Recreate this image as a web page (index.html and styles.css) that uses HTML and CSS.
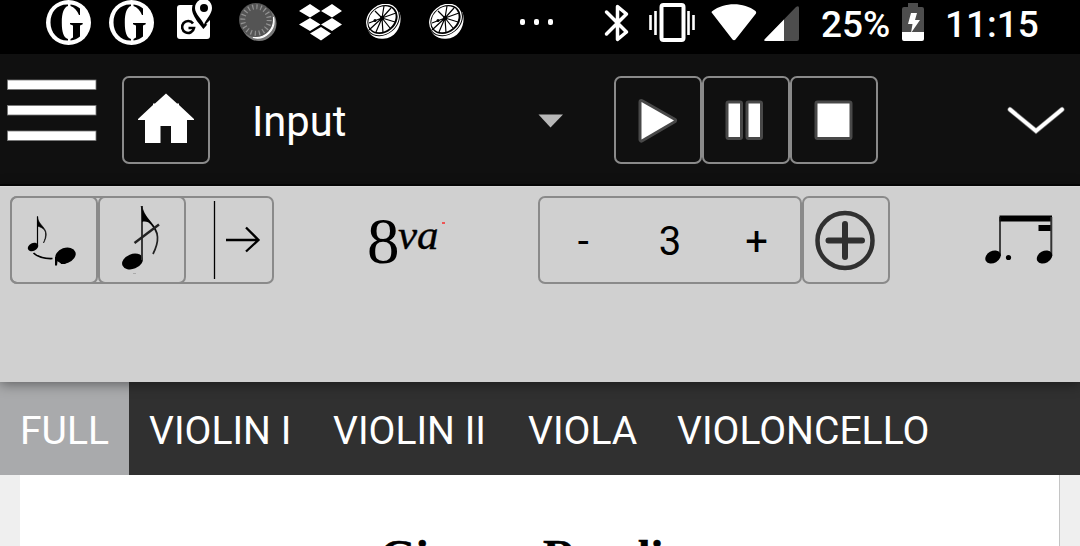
FILE: index.html
```
<!DOCTYPE html>
<html lang="en">
<head>
<meta charset="utf-8">
<title>Score editor</title>
<link rel="stylesheet" href="styles.css">
</head>
<body>
<svg class="defs" width="0" height="0">
  <defs>
    <symbol id="news" viewBox="0 0 45 45">
      <circle cx="22.5" cy="22.5" r="22.5" fill="#fff"/>
      <path d="M22 4.500C11 4 4.500 12 4.500 22.500S12 41 22 40.500V39C17.500 37.500 15.800 32 15.800 22.500S18 7 22 6Z"/>
      <path d="M24.500 4.500Q30 5 34 8.500V15H33Q30 8 24.500 6ZM24 23H36.700V24.200L34 25.500V36.500Q30 40 24.500 40.500V39L27 37.500V25.500L24 24.200Z"/>
    </symbol>
    <symbol id="citrus" viewBox="0 0 35 36">
      <path d="M33.500 8C37 18 32 34 17 34.800C8 35.500 1 29 1 22Z" fill="#fff"/>
      <ellipse cx="17" cy="16" rx="18.500" ry="14.500" transform="rotate(-40 17 16)" fill="#000"/>
      <ellipse cx="16.500" cy="15.500" rx="17" ry="13.800" transform="rotate(-40 16.500 15.500)" fill="none" stroke="#fff" stroke-width="1.300"/>
      <ellipse cx="16" cy="15.300" rx="14.800" ry="11.700" transform="rotate(-40 16 15.300)" fill="#fff"/>
      <path d="M16 14L18 2M16 14L25 4M16 14L30 9M16 14L29 18M16 14L24 24M16 14L17 29M16 14L10 28M16 14L3 26M16 14L3 19M16 14L9 7" stroke="#000" stroke-width="1.200"/>
      <circle cx="16" cy="14" r="2"/><circle cx="9" cy="16.500" r="1.500"/>
    </symbol>
  </defs>
</svg>

<div class="status">
  <svg class="s-news" width="45" height="45"><use href="#news"/></svg>
  <svg class="s-news2" width="45" height="45"><use href="#news"/></svg>
  <svg class="s-map" width="38" height="40" viewBox="0 0 38 40">
    <rect x="1" y="5" width="33" height="34" rx="3" fill="#fff"/>
    <path d="M28-3C20-3 16 3 16 9C16 17 27 28 27.500 29C28 28 40 17 40 9C40 3 36-3 28-3Z"/>
    <path d="M28-1C22-1 19 3.500 19 8C19 14 26 19 28 24.500C30 19 36 14 36 8C36 3.500 33-1 28-1Z" fill="#fff"/>
    <path d="M34 20V26L30 24Z" fill="#fff"/>
    <circle cx="28" cy="8" r="4"/>
    <path d="M17 23.500A6 6 0 1 0 18 28H12.500" fill="none" stroke="#000" stroke-width="2.600"/>
  </svg>
  <svg class="s-moon" width="38" height="38" viewBox="0 0 38 38">
    <circle cx="20" cy="20.500" r="17.500" fill="#777"/>
    <path d="M34.500 14A17 17 0 0 1 14 34.500Q32 33 34.500 14" fill="#fff" stroke="#fff" stroke-width="1.200"/>
    <circle cx="17" cy="17" r="17" fill="#545454"/>
    <circle cx="17" cy="17" r="13.200" fill="none" stroke="#929292" stroke-width="5" stroke-dasharray="1.200 2.946"/>
  </svg>
  <svg class="s-box" width="44" height="38" viewBox="0 0 44 38" fill="#fff">
    <path d="M11 0L21.500 7L11 13.500L0 7ZM33 0L43 7L33 13.500L22 7ZM11 14L21.500 20.500L11 27L0 20.500ZM33 14L43 20.500L33 27L22 20.500ZM22 23L32 29.500L22 36.500L11 29.500Z"/>
  </svg>
  <svg class="s-fruit" width="35" height="36"><use href="#citrus"/></svg>
  <svg class="s-fruit2" width="35" height="36"><use href="#citrus"/></svg>
  <svg class="s-dots" width="34" height="6" fill="#fff"><rect width="5" height="6" rx="2"/><rect x="14" width="5" height="6" rx="2"/><rect x="28" width="5" height="6" rx="2"/></svg>
  <svg class="s-bt" width="25" height="38" viewBox="0 0 25 38"><path d="M2.500 8L22.500 28L13.500 35.500V2.500L22.500 10L2.500 30" fill="none" stroke="#fff" stroke-width="3.500" stroke-linejoin="round" stroke-linecap="round"/></svg>
  <svg class="s-vib" width="46" height="39" viewBox="0 0 46 39" fill="none" stroke="#fff"><rect x="12.500" y="2" width="22" height="35" rx="2" stroke-width="4"/><path d="M1.500 12V27M6.500 8V32M39.500 8V32M44.500 12V27" stroke-width="2.600"/></svg>
  <svg class="s-wifi" width="46" height="37" viewBox="0 0 46 37"><path d="M1 9Q0 8 1.500 7C13-2 33-2 44.500 7Q45.500 8 45 9.500L24.500 35.500Q23 37 21.500 35.500Z" fill="#fff"/></svg>
  <svg class="s-sig" width="36" height="36" viewBox="0 0 36 36"><path d="M1 33L32 1Q35-1 35 2V33Q35 35 33 35H2Q-1 35 1 33Z" fill="#4d4d4d"/><path d="M1 33L20 13.500V35H2Q-1 35 1 33Z" fill="#fff"/></svg>
  <span class="s-pct">25%</span>
  <svg class="s-bat" width="22" height="38" viewBox="0 0 22 38"><path d="M6 0H16V4H20Q22 4 22 6V29H0V6Q0 4 2 4H6Z" fill="#4d4d4d"/><path d="M0 29H22V36Q22 38 20 38H2Q0 38 0 36ZM9 10H15L13 17H18L9 30L10.500 21H6Z" fill="#fff"/></svg>
  <span class="s-time">11:15</span>
</div>

<header class="header">
  <svg class="menu" width="92" height="66" viewBox="0 0 92 66" fill="#fff" stroke="#777" stroke-width=".8"><rect x="1.500" y="1" width="88.500" height="9.500"/><rect x="1.500" y="26.500" width="88.500" height="9.500"/><rect x="1.500" y="52" width="88.500" height="9.500"/></svg>
  <div class="btn home"><svg width="58" height="52" viewBox="0 0 58 52" fill="#fff"><path d="M29 .5L40 10.500H42V12L57 26V27H50V50H34V33H23.500V50H8V27H1V26L16 12V10.500H18Z"/></svg></div>
  <div class="select"><span>Input</span><svg width="26" height="14" viewBox="0 0 26 14"><path d="M.5.500H25L12.500 13.500Z" fill="#b8b8b8"/></svg></div>
  <div class="group">
    <div class="btn"><svg width="84" height="84" viewBox="0 0 84 84"><path d="M25.500 24L58 42.500L25.500 61.500Z" fill="#fff" stroke="#484848" stroke-width="6" stroke-linejoin="round" paint-order="stroke"/></svg></div>
    <div class="btn"><svg width="84" height="84" viewBox="0 0 84 84"><path d="M24.500 25.500H36V59H24.500ZM44.500 25.500H56V59H44.500Z" fill="#fff" stroke="#484848" stroke-width="6" stroke-linejoin="round" paint-order="stroke"/></svg></div>
    <div class="btn"><svg width="84" height="84" viewBox="0 0 84 84"><path d="M25.500 25.500H57.500V59H25.500Z" fill="#fff" stroke="#484848" stroke-width="6" stroke-linejoin="round" paint-order="stroke"/></svg></div>
  </div>
  <svg class="chevron" width="58" height="30" viewBox="0 0 58 30"><path d="M3 3.500L29 25L55 3.500" fill="none" stroke="#777" stroke-width="5" stroke-linecap="round"/><path d="M3 3.500L29 25L55 3.500" fill="none" stroke="#fff" stroke-width="3.600" stroke-linecap="round"/></svg>
</header>

<section class="tools">
  <div class="notes">
    <div class="btn"><svg width="84" height="84" viewBox="0 0 84 84">
      <ellipse cx="21" cy="49" rx="5.500" ry="3.900" transform="rotate(-25 21 49)"/>
      <path d="M25.500 18.500V48" stroke="#000" stroke-width="1.200"/>
      <path d="M25.500 18.500C26 29 40 30 31.500 45C37 32 31 30 25.500 28Z" stroke="#000" stroke-width=".6"/>
      <path d="M21.500 55Q28 61 40.500 60.500" fill="none" stroke="#000" stroke-width="1.700"/>
      <ellipse cx="53.500" cy="57.500" rx="10.500" ry="7.600" transform="rotate(-20 53.500 57.500)"/><path d="M43 59H46L45 67.500H43ZM47 62H57L53 66H49Z"/>
    </svg></div>
    <div class="btn"><svg width="84" height="84" viewBox="0 0 84 84">
      <ellipse cx="32.500" cy="63.500" rx="10.800" ry="7.400" transform="rotate(-22 32.500 63.500)"/>
      <path d="M42 8V62" stroke="#333" stroke-width="1.900"/>
      <path d="M41.500 8C43 22 57 26 57.500 39Q58 46 53 56" fill="none" stroke="#222" stroke-width="1.700"/>
      <path d="M41.500 8C44 20 54 24 57.500 36C53 27 48 22 42 24Z"/>
      <path d="M34.500 45L59 26.500" stroke="#222" stroke-width="2.400"/><path d="M33 75.500H36" stroke="#aaa"/>
    </svg></div>
    <svg class="arrow" width="86" height="84" viewBox="0 0 86 84" fill="none" stroke="#000"><path d="M28.500 3V81" stroke-width="1.300"/><path d="M40 42H72M60 29.500L72.500 42L60 53.500" stroke-width="2.300"/></svg>
  </div>
  <div class="octave"><span class="eight">8</span><span class="va">va</span><i></i></div>
  <div class="stepper"><span>-</span><span>3</span><span>+</span></div>
  <div class="btn add"><svg width="84" height="84" viewBox="0 0 84 84" fill="none" stroke="#303030"><circle cx="41" cy="42.500" r="27.500" stroke-width="4.500"/><path d="M24.500 42.500H58M41 26V59" stroke-width="6" stroke-linecap="round"/></svg></div>
  <svg class="rhythm" width="70" height="52" viewBox="0 0 70 52">
    <path d="M14.500 .5H67V6.500H14.500ZM53.500 10H67V16H53.500Z"/>
    <path d="M15 2V41" stroke="#111" stroke-width="1.500"/><path d="M66.300 2V41" stroke="#333" stroke-width="2"/>
    <ellipse cx="8" cy="42" rx="8.200" ry="6" transform="rotate(-30 8 42)"/><ellipse cx="59.500" cy="42" rx="8.200" ry="6" transform="rotate(-30 59.500 42)"/><circle cx="23.500" cy="42.500" r="2.600"/>
  </svg>
</section>

<nav class="tabs">
  <div class="tab active"><span>FULL</span></div>
  <div class="tab violin1"><span>VIOLIN I</span></div>
  <div class="tab violin2"><span>VIOLIN II</span></div>
  <div class="tab viola"><span>VIOLA</span></div>
  <div class="tab"><span>VIOLONCELLO</span></div>
</nav>
<main class="score"><div class="sheet"><h1><span>Gioco</span><span>Rondi</span></h1></div></main>
</body>
</html>
```
FILE: styles.css
```
* { box-sizing: border-box; }
body { margin: 0; width: 1080px; height: 546px; overflow: hidden; display: flex; flex-direction: column; font-family: Roboto, sans-serif; background: #efefef; }
svg { display: block; flex: none; }
.defs { display: none; }
.status { height: 54px; flex: none; background: #000; color: #fff; display: flex; align-items: flex-start; white-space: nowrap; font-size: 37px; font-weight: 500; line-height: 49px; }
.s-news { margin-left: 46px; }
.s-news2 { margin-left: 18px; }
.s-map { margin-left: 22px; }
.s-moon { margin: 3px 0 0 25px; }
.s-box { margin: 4px 0 0 22px; }
.s-fruit { margin: 4px 0 0 23px; }
.s-fruit2 { margin: 4px 0 0 28px; }
.s-dots { margin: 19px 0 0 56px; }
.s-bt { margin: 4px 0 0 50px; }
.s-vib { margin: 3px 0 0 20px; }
.s-wifi { margin: 4px 0 0 16px; }
.s-sig { margin: 6px 0 0 7px; }
.s-pct { width: 81px; margin-left: 21px; }
.s-bat { margin: 3px 0 0 0; }
.s-time { margin-left: 21px; }
.header { height: 132px; flex: none; background: #101010; border-bottom: 2px solid #060606; display: flex; align-items: flex-start; }
.menu { margin: 25px 0 0 6px; }
.btn { width: 88px; height: 88px; flex: none; border: 2px solid #8a8a8a; border-radius: 7px; display: flex; align-items: center; justify-content: center; }
.home { margin: 22px 0 0 24px; }
.home svg { margin-bottom: 2px; }
.select { width: 313px; height: 88px; margin: 22px 0 0 42px; display: flex; align-items: center; justify-content: space-between; color: #fff; font-size: 41.7px; line-height: 50px; }
.select span { margin-top: 3px; }
.select svg { margin: 2px 1px 0 0; }
.group { display: flex; margin: 22px 0 0 49px; }
.chevron { margin: 52px 0 0 129px; }
.tools { height: 196px; flex: none; background: #d0d0d0; border-top: 1px solid #d8d8d8; padding-top: 9px; display: flex; align-items: flex-start; position: relative; box-shadow: 0 2px 12px rgba(0,0,0,.45); }
.notes { margin-left: 10px; width: 264px; height: 88px; border: 2px solid #8a8a8a; border-radius: 7px; display: flex; }
.notes .btn { margin: -2px 0 0 -2px; }
.notes .btn + .btn { margin-left: 0; }
.octave { width: 264px; height: 88px; padding-left: 93px; display: flex; font-family: "Liberation Serif", serif; line-height: 1; }
.eight { width: 31px; font-size: 65px; margin-top: 13px; }
.va { width: 43px; font-size: 43px; font-style: italic; margin-top: 17px; -webkit-text-stroke: .4px #000; }
.octave i { width: 3px; height: 2px; margin: 26px 0 0 1px; background: #ee5555; }
.stepper { width: 264px; height: 88px; border: 2px solid #8a8a8a; border-radius: 7px; display: grid; grid-template-columns: repeat(3, 1fr); align-items: center; text-align: center; font-size: 40px; padding-top: 3px; }
.rhythm { margin: 19px 0 0 95px; }
.tabs { height: 93px; flex: none; background: #303030; display: flex; color: #fff; font-size: 39.1px; line-height: 93px; white-space: nowrap; }
.tab { padding: 3px 0 0 20px; }
.active { width: 129px; background: #a9aaac; }
.violin1 { width: 184px; }
.violin2 { width: 195px; }
.viola { width: 149px; }
.score { flex: 1; min-height: 0; padding: 0 20px; }
.sheet { height: 71px; background: #fff; border-right: 1px solid #c4c4c4; overflow: hidden; }
h1 { margin: 52px 0 0 360px; display: flex; color: #000; font: bold 46px/60px "Liberation Serif", serif; white-space: nowrap; -webkit-text-stroke: .5px #000; }
h1 span:first-child { width: 163px; }
```
